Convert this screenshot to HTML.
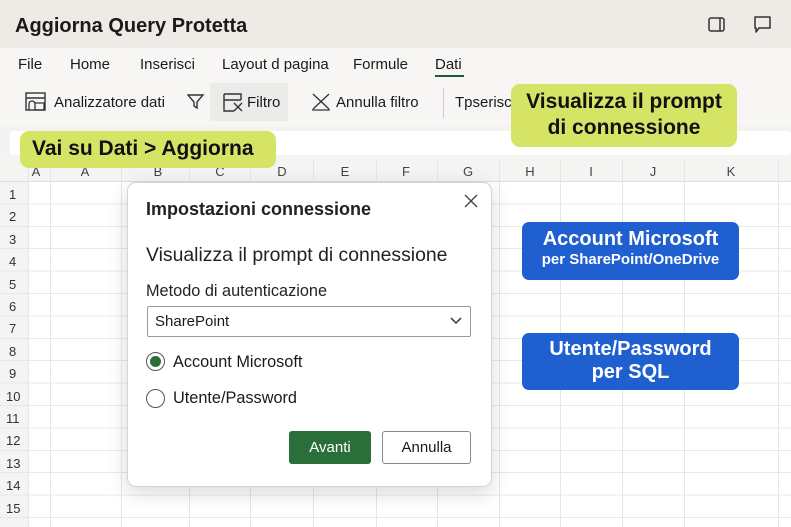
<!DOCTYPE html>
<html><head><meta charset="utf-8"><style>
*{margin:0;padding:0;box-sizing:border-box}
body{width:791px;height:527px;overflow:hidden;position:relative;background:#fff;font-family:"Liberation Sans",sans-serif;color:#1a1a1a}
.a{position:absolute}
.v{position:absolute;top:160px;bottom:0;width:1px;background:#e6e6e6}
.ch{position:absolute;top:164px;font-size:13px;color:#444;transform:translateX(-50%)}
.rn{position:absolute;left:0;width:28px;text-align:left;padding-left:9px;font-size:13px;color:#333}
</style></head><body>
<div class="a" style="left:0;top:0;width:791px;height:48px;background:#eeebe7"></div>
<div class="a" style="left:15px;top:15px;font-size:20px;font-weight:bold">Aggiorna Query Protetta</div>
<svg class="a" style="left:707px;top:16px" width="20" height="18"><rect x="2" y="2" width="15" height="13" rx="2" fill="none" stroke="#333" stroke-width="1.5"/><line x1="13" y1="2" x2="13" y2="15" stroke="#333" stroke-width="1.5"/></svg>
<svg class="a" style="left:752px;top:15px" width="22" height="20"><path d="M3 2h15v11H7l-3 4v-4H3z" fill="none" stroke="#333" stroke-width="1.5" stroke-linejoin="round"/></svg>
<div class="a" style="left:0;top:48px;width:791px;height:78px;background:#f7f6f4"></div>
<div class="a" style="top:56px;font-size:15px;left:18px">File</div>
<div class="a" style="top:56px;font-size:15px;left:70px">Home</div>
<div class="a" style="top:56px;font-size:15px;left:140px">Inserisci</div>
<div class="a" style="top:56px;font-size:15px;left:222px">Layout d pagina</div>
<div class="a" style="top:56px;font-size:15px;left:353px">Formule</div>
<div class="a" style="top:56px;font-size:15px;left:435px">Dati</div>
<div class="a" style="left:435px;top:75px;width:29px;height:2px;background:#1d5a36"></div>
<svg class="a" style="left:25px;top:92px" width="22" height="20"><rect x="1" y="1" width="19" height="17" fill="none" stroke="#333" stroke-width="1.4"/><line x1="1" y1="6" x2="20" y2="6" stroke="#333" stroke-width="1.4"/><path d="M4 18v-6a3 3 0 0 1 6 0v6M10 11h9v7h-9" fill="none" stroke="#333" stroke-width="1.3"/></svg>
<div class="a" style="left:54px;top:94px;font-size:15px">Analizzatore dati</div>
<svg class="a" style="left:187px;top:93px" width="18" height="16"><path d="M1 2h15l-6 7v6l-3-2V9z" fill="none" stroke="#333" stroke-width="1.4"/></svg>
<div class="a" style="left:210px;top:83px;width:78px;height:38px;background:#ebebea"></div>
<svg class="a" style="left:223px;top:93px" width="22" height="20"><path d="M1 1h17v6M1 1v17h10M1 7h17" fill="none" stroke="#333" stroke-width="1.4"/><path d="M11 10l8 8M19 10l-8 8" stroke="#333" stroke-width="1.4"/></svg>
<div class="a" style="left:247px;top:94px;font-size:15px">Filtro</div>
<svg class="a" style="left:311px;top:92px" width="20" height="20"><path d="M2 2l16 15M18 2L2 17M1 18h18" stroke="#333" stroke-width="1.3"/></svg>
<div class="a" style="left:336px;top:94px;font-size:15px">Annulla filtro</div>
<div class="a" style="left:443px;top:88px;width:1px;height:30px;background:#ccc"></div>
<div class="a" style="left:455px;top:94px;font-size:15px">Tpserisc</div>
<div class="a" style="left:0;top:126px;width:791px;height:34px;background:#f3f3f2"></div>
<div class="a" style="left:10px;top:131px;width:781px;height:24px;background:#fff;border-radius:3px"></div>
<div class="a" style="left:0;top:155px;width:791px;height:27px;background:#f4f4f3;border-bottom:1px solid #ddd"></div>
<div class="a" style="left:0;top:182px;width:28px;height:345px;background:#f4f4f3"></div>
<div class="a" style="left:0;top:182px;width:791px;height:345px;background:repeating-linear-gradient(to bottom,transparent 0,transparent 21.4px,#e8e8e8 21.4px,#e8e8e8 22.4px)"></div>
<div class="v" style="left:28px"></div><div class="v" style="left:50px"></div><div class="v" style="left:121px"></div><div class="v" style="left:189px"></div><div class="v" style="left:250px"></div><div class="v" style="left:313px"></div><div class="v" style="left:376px"></div><div class="v" style="left:437px"></div><div class="v" style="left:499px"></div><div class="v" style="left:560px"></div><div class="v" style="left:622px"></div><div class="v" style="left:684px"></div><div class="v" style="left:778px"></div>
<div class="ch" style="left:36px">A</div><div class="ch" style="left:85px">A</div><div class="ch" style="left:158px">B</div><div class="ch" style="left:220px">C</div><div class="ch" style="left:282px">D</div><div class="ch" style="left:345px">E</div><div class="ch" style="left:406px">F</div><div class="ch" style="left:468px">G</div><div class="ch" style="left:530px">H</div><div class="ch" style="left:591px">I</div><div class="ch" style="left:653px">J</div><div class="ch" style="left:731px">K</div>
<div class="rn" style="top:187px">1</div><div class="rn" style="top:209px">2</div><div class="rn" style="top:232px">3</div><div class="rn" style="top:254px">4</div><div class="rn" style="top:277px">5</div><div class="rn" style="top:299px">6</div><div class="rn" style="top:321px">7</div><div class="rn" style="top:344px">8</div><div class="rn" style="top:366px">9</div><div class="rn" style="top:389px;padding-left:6px">10</div><div class="rn" style="top:411px;padding-left:6px">11</div><div class="rn" style="top:433px;padding-left:6px">12</div><div class="rn" style="top:456px;padding-left:6px">13</div><div class="rn" style="top:478px;padding-left:6px">14</div><div class="rn" style="top:501px;padding-left:6px">15</div>
<div class="a" style="left:20px;top:131px;width:256px;height:37px;background:#d6e466;border-radius:9px"></div>
<div class="a" style="left:32px;top:137px;font-size:21px;font-weight:bold;color:#111">Vai su Dati &gt; Aggiorna</div>
<div class="a" style="left:511px;top:84px;width:226px;height:63px;background:#d6e466;border-radius:9px;text-align:center;font-size:21px;font-weight:bold;line-height:26px;padding-top:5px;color:#111">Visualizza il prompt<br>di connessione</div>
<div class="a" style="left:127px;top:182px;width:365px;height:305px;background:#fff;border:1px solid #d4d4d4;border-radius:9px;box-shadow:0 6px 20px rgba(0,0,0,.15)"></div>
<svg class="a" style="left:463px;top:193px" width="16" height="16"><path d="M2 2l12 12M14 2L2 14" stroke="#444" stroke-width="1.4"/></svg>
<div class="a" style="left:146px;top:199px;font-size:18px;font-weight:bold;color:#222">Impostazioni connessione</div>
<div class="a" style="left:146px;top:244px;font-size:19.4px;color:#222">Visualizza il prompt di connessione</div>
<div class="a" style="left:146px;top:282px;font-size:16.3px;color:#222">Metodo di autenticazione</div>
<div class="a" style="left:147px;top:306px;width:324px;height:31px;border:1px solid #999;border-radius:2px"></div>
<div class="a" style="left:155px;top:313px;font-size:15px">SharePoint</div>
<svg class="a" style="left:449px;top:316px" width="14" height="10"><path d="M2 2l5 5 5-5" fill="none" stroke="#333" stroke-width="1.5"/></svg>
<div class="a" style="left:146px;top:352px;width:19px;height:19px;border:1.5px solid #555;border-radius:50%"></div>
<div class="a" style="left:150px;top:356px;width:11px;height:11px;background:#2a6e3a;border-radius:50%"></div>
<div class="a" style="left:173px;top:353px;font-size:16.3px">Account Microsoft</div>
<div class="a" style="left:146px;top:389px;width:19px;height:19px;border:1.5px solid #555;border-radius:50%"></div>
<div class="a" style="left:173px;top:389px;font-size:16.3px">Utente/Password</div>
<div class="a" style="left:289px;top:431px;width:82px;height:33px;background:#2a6e3a;border-radius:3px;color:#fff;font-size:15px;text-align:center;line-height:33px">Avanti</div>
<div class="a" style="left:382px;top:431px;width:89px;height:33px;border:1px solid #888;border-radius:3px;font-size:15px;text-align:center;line-height:31px">Annulla</div>
<div class="a" style="left:522px;top:222px;width:217px;height:58px;background:#1f5fd0;border-radius:7px;color:#fff;text-align:center;padding-top:6px"><div style="font-size:20px;font-weight:bold">Account Microsoft</div><div style="font-size:15px;font-weight:bold">per SharePoint/OneDrive</div></div>
<div class="a" style="left:522px;top:333px;width:217px;height:57px;background:#1f5fd0;border-radius:7px;color:#fff;text-align:center;padding-top:5px;font-size:20px;font-weight:bold;line-height:23px">Utente/Password<br>per SQL</div>
</body></html>
